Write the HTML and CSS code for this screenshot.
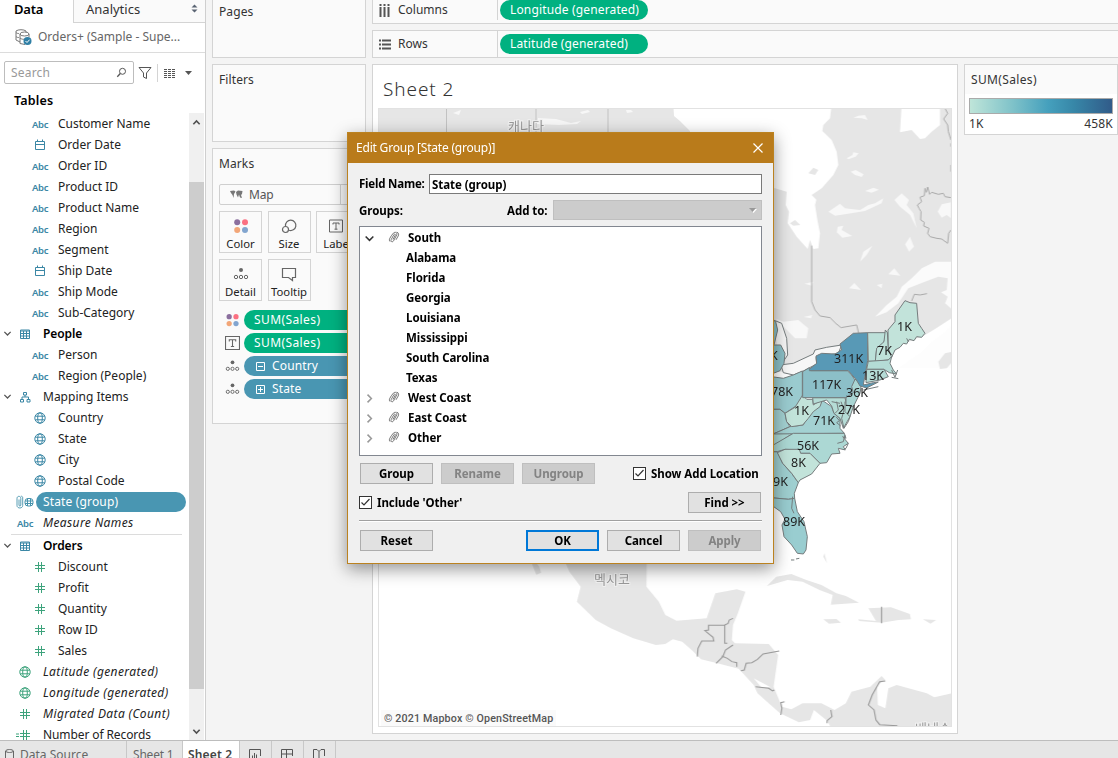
FILE: index.html
```html
<!DOCTYPE html>
<html lang="en">
<head>
<meta charset="utf-8">
<title>Sheet 2</title>
<link rel="stylesheet" href="styles.css">
</head>
<body>
<svg class="defs" width="0" height="0">
  <symbol id="globe" viewBox="0 0 12 12"><g fill="none" stroke="currentColor"><circle cx="6" cy="6" r="5.2"/><ellipse cx="6" cy="6" rx="2.3" ry="5.2"/><path d="M1.300 4.200h9.400M1.300 7.800h9.400"/></g></symbol>
  <symbol id="hash" viewBox="0 0 12 12"><path d="M4.500 1v10M7.500 1v10M1 4.500h10M1 7.500h10" fill="none" stroke="currentColor"/></symbol>
  <symbol id="cal" viewBox="0 0 12 12"><path d="M1.500 2.500h9v8h-9zM1.500 5.500h9M3.500 .5v2M8.500 .5v2" fill="none" stroke="currentColor"/></symbol>
  <symbol id="table" viewBox="0 0 12 12"><path d="M1.500 2h9v8.500h-9zM1 3h10M1.500 5.500h9M1.500 8h9M4.500 3v7.500M7.500 3v7.500" fill="none" stroke="currentColor"/></symbol>
  <symbol id="tree" viewBox="0 0 12 12"><path d="M4.500 1.500h3v2.500h-3zM1.500 8.500h3v2.500h-3zM8 8.500h3v2.500h-3zM6 4v2M3 8.500v-2.500h6.500v2.500" fill="none" stroke="currentColor"/></symbol>
  <symbol id="down" viewBox="0 0 10 10"><path d="M1.500 3.200L5 6.700l3.500-3.500" fill="none" stroke="currentColor" stroke-width="1.400"/></symbol>
  <symbol id="clip" viewBox="0 0 12 12"><path d="M5 8.500L7.200 4.300C7.800 3 6.300 2.700 5.800 3.700L3.200 8.600c-.9 2 1.300 3 2.300 1.300L8.700 4C9.800 1.700 7.300.4 5.400 2.100 3.900 3.500 2.700 5.800 1.800 7.300c-.7 1.200-.5 2.600.3 3.300M8.700 1.200c2 .3 2.300 2.200 1.500 3.800L8 8.800" fill="none" stroke="currentColor" stroke-width=".8"/></symbol>
  <symbol id="detail" viewBox="0 0 16 13"><circle cx="8" cy="2.500" r="2" fill="#666"/><g fill="none" stroke="#666"><circle cx="3" cy="9.500" r="1.700"/><circle cx="8" cy="9.500" r="1.700"/><circle cx="13" cy="9.500" r="1.700"/></g></symbol>
  <symbol id="dots" viewBox="0 0 16 16"><circle cx="4.200" cy="4.200" r="3" fill="#8b6f9e"/><circle cx="12" cy="4.200" r="3" fill="#fb7182"/><circle cx="4.200" cy="12" r="3" fill="#f2a678"/><circle cx="12" cy="12" r="3" fill="#82a5cf"/></symbol>
  <symbol id="text" viewBox="0 0 14 13"><path d="M.5.5h13v12H.5zM4 5V3.500h6V5M7 3.500v6.300M5.500 9.700h3" fill="none" stroke="#666"/></symbol>
</svg>

<div class="app">
  <aside class="side">
    <div class="tabs"><div class="tab on">Data</div><div class="tab off">Analytics
      <svg width="7" height="9" viewBox="0 0 7 9"><path d="M.5 3.500h6L3.500.5zM.5 5.500h6l-3 3z" fill="#5a6473"/></svg></div></div>
    <div class="source">
      <svg width="18" height="17" viewBox="0 0 18 17"><g fill="none" stroke="#777"><path d="M11 3V2C9 .3 3 .3 1 2v9l4 2"/><path d="M1 3.500c1 1 2 1 3 1M1 7.500c1 1 2 1 3 1"/><ellipse cx="9.500" cy="5" rx="4.500" ry="2"/><path d="M5 5v9.500l5 1M14 5v3M5 9c2 1.500 3 1.300 4.500 1.300"/></g><circle cx="12.500" cy="12" r="4" fill="#2f7fa5"/><path d="M10.500 12l1.500 1.500 2.600-2.800" fill="none" stroke="#fff"/></svg>
      <span>Orders+ (Sample - Supe...</span>
    </div>
    <div class="searchrow">
      <div class="search"><span>Search</span><svg width="11" height="11" viewBox="0 0 11 11"><circle cx="6.500" cy="4.300" r="3" fill="none" stroke="#555"/><path d="M4.300 6.500L1.300 9.700" stroke="#555" stroke-width="1.300"/></svg></div>
      <svg width="14" height="14" viewBox="0 0 14 14"><path d="M1 1.500h12L8.500 7v5.500l-3-1.500V7z" fill="none" stroke="#555"/></svg>
      <i class="vr"></i>
      <svg width="12" height="10" viewBox="0 0 12 10"><path d="M0 1.500h12M0 3.500h12M0 5.500h12M0 7.500h12M0 9.500h12" stroke="#555" stroke-dasharray="3 1"/></svg>
      <svg class="drop" width="7" height="4" viewBox="0 0 7 4"><path d="M0 0h7L3.500 4z" fill="#555"/></svg>
    </div>
    <h2 class="tables">Tables</h2>
    <div class="listwrap">
      <div class="list">
        <div class="row sub"><b>Abc</b><span>Customer Name</span></div>
        <div class="row sub"><svg><use href="#cal"/></svg><span>Order Date</span></div>
        <div class="row sub"><b>Abc</b><span>Order ID</span></div>
        <div class="row sub"><b>Abc</b><span>Product ID</span></div>
        <div class="row sub"><b>Abc</b><span>Product Name</span></div>
        <div class="row sub"><b>Abc</b><span>Region</span></div>
        <div class="row sub"><b>Abc</b><span>Segment</span></div>
        <div class="row sub"><svg><use href="#cal"/></svg><span>Ship Date</span></div>
        <div class="row sub"><b>Abc</b><span>Ship Mode</span></div>
        <div class="row sub"><b>Abc</b><span>Sub-Category</span></div>
        <div class="row head"><svg class="car"><use href="#down"/></svg><svg><use href="#table"/></svg><span>People</span></div>
        <div class="row sub"><b>Abc</b><span>Person</span></div>
        <div class="row sub"><b>Abc</b><span>Region (People)</span></div>
        <div class="row"><svg class="car"><use href="#down"/></svg><svg><use href="#tree"/></svg><span>Mapping Items</span></div>
        <div class="row sub"><svg><use href="#globe"/></svg><span>Country</span></div>
        <div class="row sub"><svg><use href="#globe"/></svg><span>State</span></div>
        <div class="row sub"><svg><use href="#globe"/></svg><span>City</span></div>
        <div class="row sub"><svg><use href="#globe"/></svg><span>Postal Code</span></div>
        <div class="row sel"><svg class="pair" viewBox="0 0 18 14"><path d="M3 4.500v5.500c0 1.500 1.800 1.500 1.800 0V3.500C4.800.6 1 .6 1 3.500v7c0 3.300 5.700 3.300 5.700 0V2.500C6.700 1.500 5.500 1 4.800 1.300" fill="none" stroke="#4693ad" stroke-width=".9"/><g fill="none" stroke="#4693ad"><rect x="9" y="3.500" width="8" height="7.500" rx="3"/><path d="M9 6h8M9 8.500h8M11.500 3.500v7.500M14.500 3.500v7.500"/></g></svg><span>State (group)</span></div>
        <div class="row it"><b>Abc</b><span>Measure Names</span></div>
        <hr>
        <div class="row head"><svg class="car"><use href="#down"/></svg><svg><use href="#table"/></svg><span>Orders</span></div>
        <div class="row sub green"><svg><use href="#hash"/></svg><span>Discount</span></div>
        <div class="row sub green"><svg><use href="#hash"/></svg><span>Profit</span></div>
        <div class="row sub green"><svg><use href="#hash"/></svg><span>Quantity</span></div>
        <div class="row sub green"><svg><use href="#hash"/></svg><span>Row ID</span></div>
        <div class="row sub green"><svg><use href="#hash"/></svg><span>Sales</span></div>
        <div class="row it green"><svg><use href="#globe"/></svg><span>Latitude (generated)</span></div>
        <div class="row it green"><svg><use href="#globe"/></svg><span>Longitude (generated)</span></div>
        <div class="row it green"><svg><use href="#hash"/></svg><span>Migrated Data (Count)</span></div>
        <div class="row green calc"><svg viewBox="0 0 15 12"><path d="M0 5h3M0 7.500h3M7.500 1v10M10.500 1v10M4 4.500h10M4 7.500h10" fill="none" stroke="currentColor"/></svg><span>Number of Records</span></div>
      </div>
      <div class="scroll"><svg viewBox="0 0 10 10"><path d="M1.500 7L5 3.300 8.500 7" fill="none" stroke="#505050" stroke-width="1.800"/></svg><i></i><svg viewBox="0 0 10 10"><path d="M1.500 3L5 6.700 8.500 3" fill="none" stroke="#505050" stroke-width="1.800"/></svg></div>
    </div>
  </aside>

  <section class="cards">
    <div class="card pages">Pages</div>
    <div class="card filters">Filters</div>
    <div class="card marks">
      <div class="mt">Marks</div>
      <div class="select"><svg width="13" height="9" viewBox="0 0 13 9"><path d="M0 1l4-.5 1.500 1L4 4 3.500 8 2.500 5 1 3zM6 2l2-1.500L12.500 1l-.5 3-1 1 1 3-2-.5-1-3-1 3-1.500-3z" fill="#777"/></svg><span>Map</span></div>
      <div class="btns">
        <div class="mb"><svg width="16" height="16"><use href="#dots"/></svg>Color</div>
        <div class="mb"><svg width="16" height="16" viewBox="0 0 16 16"><g fill="none" stroke="#666" stroke-width="1.200"><path d="M4.500 8a5.200 5.200 0 1 1 3.500 4.300"/><circle cx="4.500" cy="11.500" r="3"/></g></svg>Size</div>
        <div class="mb"><svg class="lt-ic" width="14" height="16"><use href="#text"/></svg>Label</div>
        <div class="mb"><svg width="16" height="16"><use href="#detail"/></svg>Detail</div>
        <div class="mb"><svg width="16" height="16" viewBox="0 0 16 16"><path d="M1.500 2.500h13v9h-3v3l-4-3h-6z" fill="none" stroke="#666" stroke-width="1.200"/></svg>Tooltip</div>
      </div>
      <div class="pr"><svg><use href="#dots"/></svg><div class="pill g">SUM(Sales)</div></div>
      <div class="pr"><svg><use href="#text"/></svg><div class="pill g">SUM(Sales)</div></div>
      <div class="pr"><svg><use href="#detail"/></svg><div class="pill b"><svg viewBox="0 0 9 9"><path d="M.5.5h8v8h-8zM2 4.500h5" fill="none" stroke="#fff"/></svg>Country</div></div>
      <div class="pr"><svg><use href="#detail"/></svg><div class="pill b"><svg viewBox="0 0 9 9"><path d="M.5.5h8v8h-8zM2 4.500h5M4.500 2v5" fill="none" stroke="#fff"/></svg>State</div></div>
    </div>
  </section>

  <main class="main">
    <div class="shelf first"><div class="lab"><svg width="12" height="13" viewBox="0 0 12 13"><path d="M1.500 0v2M5.500 0v2M9.500 0v2M1.500 3v10M5.500 3v10M9.500 3v10" stroke="#555" stroke-width="2"/></svg>Columns</div><div class="pill g">Longitude (generated)</div></div>
    <div class="shelf"><div class="lab"><svg width="12" height="11" viewBox="0 0 12 11"><path d="M0 1.500h2M3 1.500h9M0 5.500h2M3 5.500h9M0 9.500h2M3 9.500h9" stroke="#555" stroke-width="2"/></svg>Rows</div><div class="pill g">Latitude (generated)</div></div>
    <div class="work">
      <div class="sheet">
        <h1>Sheet 2</h1>
        <svg class="map" viewBox="378 108 574 619">
          <defs><filter id="soft" x="-5%" y="-5%" width="110%" height="110%"><feGaussianBlur stdDeviation=".5"/></filter></defs>
          <g filter="url(#soft)" fill="#e6e6e6">
            <path d="M370 100H673L674 116 680 121 690 131 690 200H370Z"/>
            <g transform="translate(765 105) scale(.3333)">
              <path d="M200 0L195 40 175 60 172 78 200 105 215 140 220 180 205 210 170 250 140 270 154 284 150 300 158 350 165 385 160 430 145 432 135 405 128 432 95 395 68 355 72 320 62 300 65 260 30 250H-100V800H200L380 730 420 715 480 690 510 672 560 640 580 500V0H525L525 60 500 80 480 100 465 102 440 75 405 82 410 0Z"/>
              <path d="M580 470H510L470 490 440 520 410 545 395 575 365 600 330 635 365 622 400 595 430 550 480 530 520 515 548 520 545 555 528 562 548 575 540 595 580 630Z" fill="#fbfbfb"/>
              <path d="M470 740L500 710 540 680 560 660V690L580 790H400Z" fill="#fdfdfd"/>
              <path d="M520 770L540 745 562 740V770L545 790 525 792Z"/>
              <g fill="#f8f8f8"><path d="M265 38L280 32 300 30 308 45 290 40ZM245 160L262 150 265 142 281 145 272 155 250 163ZM257 200L272 195 296 208 290 216 270 210ZM300 258L325 248 342 254 320 263ZM190 320L225 296 240 310 285 315 310 300 330 295 355 280 350 295 300 318 240 328 210 332ZM388 285L410 265 432 285 425 300 445 325 455 370 435 330 405 305ZM218 365L235 362 230 375 262 393 232 398 215 382ZM420 418L435 395 447 425 432 440ZM285 470L295 440 322 422 305 450ZM252 550L268 534 288 555ZM370 508L388 490 406 512ZM335 540L352 536 350 550ZM118 536L145 530 140 542ZM518 320L530 298 558 292V340L545 330 530 338ZM30 640L55 650 100 645 130 670 125 700 90 700 60 670ZM116 636L142 630 138 640Z"/></g>
              <path d="M75 355L90 345 106 360 85 362ZM130 205L145 188 160 195 150 210Z"/>
              <path d="M140 422V590L150 615 165 633 195 638 212 655 228 668 275 660 281 685M440 588L448 568 465 570 486 566M480 250L484 262 488 246 494 268 500 262 520 268 535 265 540 275 558 278M480 250L478 272 465 277 470 290 457 300 462 310 468 320 467 345 478 352 476 363 492 370 488 385 495 395 515 400 530 402 548 415 551 385 558 375M540 10L548 25 536 42 548 60 550 80 558 105M558 115V125M558 180V200" fill="none" stroke="#aaa" stroke-width="3"/>
            </g>
            <path d="M446.500 100V140M536 100V140M608 100V140" stroke="#c2c2c2"/>
            <path d="M453 113l8-3-2 5zM538 118l18 1 15 4 10-2-4 3-18 1-22-1zM580 112l8-2 2 2-8 2zM626 110h5l2 2-6 1z" fill="#f7f7f7"/>
            <g transform="translate(370 550) scale(.3762 .3333)">
              <path d="M505 0L530 65 560 110 550 155 600 210 640 235 700 265 760 285 785 282 805 268 830 275 855 300 880 328 918 338 980 356 985 362 1020 405 1030 430 1065 465 1090 490 1140 517 1170 510 1180 480 1215 512 1225 532H1547V430L1500 442 1480 430 1400 405 1378 415 1370 475 1350 465 1348 405 1370 390 1360 378 1330 410 1280 425 1265 460 1235 480 1200 460 1150 460 1120 478 1095 470 1073 410 1085 315 1060 282 970 280 962 270 965 225 978 190 998 125 975 118 918 130 895 205 815 212 785 195 768 155 735 110 736 0ZM410 0L430 40 442 74 455 68 450 50 430 20 428 0ZM1055 108L1080 80 1120 72 1160 90 1200 105 1240 130 1265 138 1300 158 1225 164 1230 135 1195 120 1150 95 1110 90ZM1205 208L1240 207 1252 218 1220 221ZM1298 208L1345 213 1325 175 1385 172 1435 192 1438 208 1405 210 1360 218 1300 213ZM1470 208L1505 210 1490 221ZM1208 10L1215 40 1205 20Z"/>
              <path d="M1020 385L1065 412 1040 412Z" fill="#fff"/>
              <path d="M870 320L872 295 882 273H914L912 262 890 242 900 240 900 226H943V280H950M943 225L952 220 955 210 965 205M920 340L938 320 945 300 965 285M935 318L950 325 962 335 975 338V350M986 362L995 360 1000 340 1015 338 1030 328 1045 312 1088 303M1025 410L1060 415 1070 423 1075 420M1102 455L1092 458 1095 475 1092 495M1225 480L1228 500 1215 512 1215 520M1370 393L1355 395 1335 435 1325 465 1340 480 1345 510 1355 524 1402 527M1360 170V220" fill="none" stroke="#999" stroke-width="3"/>
            </g>
          </g>
          <g transform="translate(760 270) scale(.3333)" stroke="#747b7c" stroke-width="3" stroke-linejoin="round">
            <path d="M40 150L65 160 80 205 83 255 63 285 70 308 100 315 130 303 170 282 168 262 235 250 245 225 200 232 165 240 160 252 100 280 60 285" fill="#f7f7f7"/>
            <path d="M20 140L47 155 53 180 42 225 62 225 75 250 72 280 60 302 20 318Z" fill="#8cc1c8"/>
            <path d="M20 318L70 325 100 315 127 303V400L105 410 75 430 60 418 20 418Z" fill="#9acbcf"/>
            <path d="M20 418L60 418 75 430 80 455 90 470 40 492H20Z" fill="#a3d1d2"/>
            <path d="M20 490H100L75 505 30 545H20Z" fill="#acd8d4"/>
            <path d="M20 545H52L68 580 95 610 115 638 103 670 104 685 85 688 20 682Z" fill="#9fcfd0"/>
            <path d="M20 682L85 688 104 685 112 725 132 755 142 800 138 840 130 852 112 850 95 825 72 800 66 765 75 748 62 725 20 695Z" fill="#99cdd0"/>
            <path d="M40 492L90 470 130 465 150 425 175 410 188 392 215 410 222 430 240 445 240 475 253 490Z" fill="#a3d1d2"/>
            <path d="M40 525L100 490H253L258 505 248 500 265 520 250 530 256 540 235 535 240 550 215 552 200 578 180 580 150 550H120L118 540 75 538 52 545 40 545Z" fill="#acd8d4"/>
            <path d="M52 548L75 538H118L122 550H150L180 580 155 612 120 630 115 638 95 610 68 580Z" fill="#c2e3da"/>
            <path d="M128 375L140 388H158L160 405 188 387 180 410 160 425 145 445 128 465 95 470 80 455 75 430 105 412Z" fill="#c2e3da"/>
            <path d="M158 383H255L260 405 280 410 270 440 250 475 240 445 222 430 215 408 200 390 160 402Z" fill="#b5dcd6"/>
            <path d="M128 305L148 293 152 302H262L275 315 285 330 278 350 282 368 258 383H128Z" fill="#8cbfc8"/>
            <path d="M285 328L305 338 300 370 280 410 258 405V383L280 368 275 350Z" fill="#a9d5d3"/>
            <path d="M148 298L170 280 168 258 185 250 225 252 245 240 240 222 280 190 323 188V272L318 300 310 345 340 338 355 336 320 354 300 348 288 328 265 302H148Z" fill="#5899b6"/>
            <path d="M323 188H382L370 220 350 235 346 274H325Z" fill="#bce0d9"/>
            <path d="M382 188L376 180 372 215 350 235 346 274 385 270 395 260 385 235Z" fill="#bfe2da"/>
            <path d="M325 274L385 270 395 260 390 280 400 300 410 312 388 308 372 298H320Z" fill="#b4dcd6"/>
            <path d="M320 298H372L385 320 360 330 318 338Z" fill="#b5dcd6"/>
            <path d="M384 180L405 155V135L435 92 450 98 470 100 475 160 485 175 495 190 485 202 470 200 462 212 448 208 440 222 430 220 420 232 405 240 395 262 385 235Z" fill="#c2e3da"/>
            <path d="M243 395L252 420 245 445 252 475 265 455 270 440 255 425V395M228 440L238 452 230 458 242 468M255 495L250 515 232 520M265 520L258 535 252 538M98 680L95 715 102 730M395 300L405 322 413 300M395 322L415 326M440 205L445 215M103 870H93M118 865L108 867M230 395L235 420 225 430M240 400L215 395M355 350L310 360" fill="none"/>
          </g>
          <g class="ml"><text x="897" y="331">1K</text><text x="877" y="355">7K</text><text x="834" y="363">311K</text><text x="862" y="380">13K</text><text x="812" y="389">117K</text><text x="846" y="397">36K</text><text x="771" y="396">78K</text><text x="794" y="415">1K</text><text x="838" y="414">27K</text><text x="813" y="425">71K</text><text x="797" y="450">56K</text><text x="791" y="467">8K</text><text x="773" y="486">9K</text><text x="783" y="526">89K</text><text x="770" y="360">K</text></g>
          <g class="mk"><text x="508" y="131">캐나다</text><text x="594" y="584">멕시코</text><text x="915" y="733">베네수</text></g>
        </svg>
        <div class="attr">© 2021 Mapbox © OpenStreetMap</div>
      </div>
      <div class="legend"><div class="lt">SUM(Sales)</div><div class="ramp"></div><div class="ends"><span>1K</span><span>458K</span></div></div>
    </div>
  </main>
</div>

<footer class="foot">
  <div class="ft ds"><svg width="9" height="12" viewBox="0 0 9 12"><path d="M.5 2v8c1 2 7 2 8 0V2M.5 2c1 2 7 2 8 0-1-2-7-2-8 0z" fill="none" stroke="#666"/></svg>Data Source</div>
  <div class="ft s1">Sheet 1</div>
  <div class="ft on">Sheet 2</div>
  <div class="ft ic"><svg viewBox="0 0 12 12"><path d="M11.500 7V.5H.5v11h7M3.500 9V6.500M5.500 9V4M7.500 9V5.500M11.500 9v3M9.500 11h4" fill="none" stroke="#555"/></svg></div>
  <div class="ft ic"><svg viewBox="0 0 12 12"><path d="M11.500 7V.5H.5v9h7M.5 5h11M5.500.5v9M10.500 9v3M9 10.500h3" fill="none" stroke="#555"/></svg></div>
  <div class="ft ic"><svg viewBox="0 0 12 12"><path d="M6 2.500L4 .5H.5v9H4l2 1.500V2.500l2-2h3.500V7M10.500 9v3M9 10.500h3" fill="none" stroke="#555"/></svg></div>
</footer>

<div class="dialog">
  <div class="title"><span>Edit Group [State (group)]</span><svg width="10" height="10" viewBox="0 0 10 10"><path d="M.5.5l9 9M9.500.5l-9 9" stroke="#fff" stroke-width="1.200"/></svg></div>
  <div class="body">
    <div class="frow"><label>Field Name:</label><div class="input">State (group)</div></div>
    <div class="grow"><label>Groups:</label><label class="add">Add to:</label><div class="combo"><svg width="8" height="5" viewBox="0 0 8 5"><path d="M1 1h7L4.500 5z" fill="#fff"/><path d="M0 0h7L3.500 4z" fill="#999"/></svg></div></div>
    <div class="tree">
      <div class="tr"><svg class="ar dk"><use href="#down"/></svg><svg class="cl"><use href="#clip"/></svg>South</div>
      <div class="tr kid">Alabama</div><div class="tr kid">Florida</div><div class="tr kid">Georgia</div><div class="tr kid">Louisiana</div><div class="tr kid">Mississippi</div><div class="tr kid">South Carolina</div><div class="tr kid">Texas</div>
      <div class="tr"><svg class="ar rt"><use href="#down"/></svg><svg class="cl"><use href="#clip"/></svg>West Coast</div>
      <div class="tr"><svg class="ar rt"><use href="#down"/></svg><svg class="cl"><use href="#clip"/></svg>East Coast</div>
      <div class="tr"><svg class="ar rt"><use href="#down"/></svg><svg class="cl"><use href="#clip"/></svg>Other</div>
    </div>
    <div class="brow r1"><div class="btn">Group</div><div class="btn dis">Rename</div><div class="btn dis">Ungroup</div><div class="chk push"><i><svg viewBox="0 0 11 11"><path d="M1.500 5.500L4 8l5.500-6" fill="none" stroke="#333" stroke-width="1.200"/></svg></i>Show Add Location</div></div>
    <div class="brow r2"><div class="chk"><i><svg viewBox="0 0 11 11"><path d="M1.500 5.500L4 8l5.500-6" fill="none" stroke="#333" stroke-width="1.200"/></svg></i>Include 'Other'</div><div class="btn push">Find &gt;&gt;</div></div>
    <div class="rule"></div>
    <div class="brow r3"><div class="btn">Reset</div><div class="btn ok push">OK</div><div class="btn">Cancel</div><div class="btn dis">Apply</div></div>
  </div>
</div>
</body>
</html>
```
FILE: styles.css
```css
* { box-sizing: border-box; }
body { margin: 0; width: 1118px; height: 758px; overflow: hidden; position: relative; background: #f4f4f4; font: 12px/16px "Noto Sans", "Noto Sans CJK KR", sans-serif; color: #333; }
svg { flex: none; display: block; }
.defs { position: absolute; }
.app { display: flex; height: 741px; overflow: hidden; }

/* Data pane */
.side { width: 206px; flex: none; background: #fff; border-right: 1px solid #cfcfcf; display: flex; flex-direction: column; white-space: nowrap; }
.tabs { display: flex; height: 23px; font-size: 13px; }
.tab { height: 23px; line-height: 18px; }
.tab.on { width: 73px; padding-left: 14px; font-weight: 600; color: #000; letter-spacing: -.2px; }
.tab.off { flex: 1; padding: 0 7px 0 12px; border: 1px solid #d4d4d4; border-width: 0 0 1px 1px; background: #fafafa; display: flex; justify-content: space-between; }
.tab.off svg { margin-top: 4px; }
.source { height: 30px; border-bottom: 1px solid #dcdcdc; display: flex; align-items: center; gap: 5px; padding-left: 15px; color: #666; }
.source span { margin-top: -1px; }
.searchrow { display: flex; height: 39px; align-items: center; padding-left: 4px; }
.search { width: 130px; height: 23px; border: 1px solid #bdbdbd; border-radius: 2px; display: flex; align-items: center; justify-content: space-between; padding: 0 6px; color: #999; margin-right: 4px; letter-spacing: .2px; }
.vr { width: 1px; height: 18px; background: #d4d4d4; margin: 0 6px 0 5px; }
.drop { margin-left: 9px; }
.tables { margin: 0; height: 21px; line-height: 17px; padding-left: 14px; font-size: 12.500px; font-weight: 600; color: #000; letter-spacing: .2px; }
.listwrap { flex: 1; min-height: 0; display: flex; }
.list { width: 189px; overflow: hidden; }
.row { height: 21px; display: flex; align-items: center; position: relative; padding-left: 19px; color: #222; }
.row > svg { width: 12px; height: 12px; margin-right: 12px; }
.row > svg, .row b { color: #3b87a5; }
.row b { width: 18px; font: 600 9.500px/16px "Noto Sans"; margin: 2px 8px 0 -2px; letter-spacing: -.3px; }
.row span { margin-top: .5px; }
.row.sub { padding-left: 34px; }
.row > svg.car { width: 9px; height: 9px; margin: 0 7px 0 -16px; color: #555; }
.row.green > svg { color: #3da37c; }
.row.head span { font-weight: 600; color: #000; letter-spacing: -.1px; }
.row.it span { font-style: italic; letter-spacing: .38px; }
.row.sel { padding-left: 16px; }
.row.sel .pair { width: 18px; height: 14px; margin-right: 2px; }
.row.sel span { background: #4996b2; color: #fff; width: 150px; height: 20px; line-height: 19px; border-radius: 10px; padding-left: 7px; letter-spacing: .15px; margin: 0; }
.row.calc { padding-left: 16px; }
.row.calc > svg { width: 15px; }
.row.calc span { margin-top: 0; letter-spacing: -.1px; }
.list hr { border: 0; border-top: 1px solid #dcdcdc; margin: 1px 7px 0 11px; }
.scroll { width: 15px; background: #f0f0f0; display: flex; flex-direction: column; align-items: center; padding: 5px 0; }
.scroll svg { width: 9px; height: 9px; }
.scroll i { width: 15px; height: 507px; background: #cdcdcd; margin: 55px 0 38px; }

/* Cards */
.cards { width: 154px; flex: none; margin-left: 6px; display: flex; flex-direction: column; gap: 6px; }
.card { border: 1px solid #d4d4d4; background: #fafafa; padding: 7px 6px 6px; letter-spacing: .1px; }
.pages { height: 58px; border-top: 0; padding-top: 4px; }
.filters { height: 78px; }
.marks { height: 276px; overflow: hidden; }
.mt { height: 28px; }
.select { border: 1px solid #cfcfcf; border-radius: 2px; height: 21px; display: flex; align-items: center; gap: 6px; padding-left: 10px; color: #555; letter-spacing: -.2px; background: linear-gradient(90deg, transparent 120px, #cfcfcf 120px, #cfcfcf 121px, transparent 121px); }
.btns { display: grid; grid-template-columns: repeat(3, 43px); column-gap: 5.500px; row-gap: 6px; margin-top: 6px; }
.mb { height: 42px; border: 1px solid #d4d4d4; display: flex; flex-direction: column; align-items: center; justify-content: space-between; padding-top: 6px; font-size: 11.300px; letter-spacing: 0; color: #222; white-space: nowrap; }
.lt-ic { margin-right: 3px; }
.btns + .pr { margin-top: 9px; }
.pr { display: flex; align-items: center; gap: 4px; margin-bottom: 3px; padding-left: 6px; }
.pr > svg { width: 15px; height: 14px; }
.pill { height: 20px; border-radius: 10px; color: #fff; line-height: 18px; padding: 0 0 1px 10px; font-size: 12px; width: 148px; flex: none; display: flex; align-items: center; letter-spacing: .15px; }
.pr .pill.g { letter-spacing: .4px; }
.pill.g { background: #00b180; }
.pill.b { background: #4996b2; }
.pill svg { width: 9px; height: 9px; margin: 1px 7px 0 2px; }

/* Worksheet */
.main { flex: 1; min-width: 0; margin-left: 6px; display: flex; flex-direction: column; }
.shelf { height: 28px; border: 1px solid #d4d4d4; background: #fafafa; display: flex; align-items: center; margin-bottom: 6px; gap: 2px; border-right: 0; }
.shelf.first { height: 24px; border-top: 0; padding-bottom: 3px; }
.lab { width: 125px; height: 100%; border-right: 1px solid #d4d4d4; display: flex; align-items: center; gap: 7px; padding-left: 6px; }
.work { display: flex; gap: 6px; flex: 1; align-items: flex-start; }
.sheet { width: 586px; height: 670px; border: 1px solid #d4d4d4; background: #fff; padding: 0 5px; position: relative; }
.sheet h1 { margin: 0; height: 43px; line-height: 49px; font-size: 19px; font-weight: 300; padding-left: 5px; color: #333; letter-spacing: .9px; }
.map { width: 574px; height: 619px; outline: 1px solid #e2e2e2; outline-offset: -1px; }
.ml { font-size: 12.500px; fill: #222; }
.mk { font: 13px "Noto Sans CJK KR", sans-serif; fill: #999; stroke: #f2f2f2; stroke-width: 2px; paint-order: stroke; }
.attr { position: absolute; left: 8px; bottom: 7px; padding: 0 3px; background: #fafafa; color: #555; font: 500 10.700px/14px Roboto, sans-serif; height: 16px; line-height: 17px; letter-spacing: .15px; }
.legend { width: 154px; height: 71px; border: 1px solid #d4d4d4; background: #fff; }
.lt { height: 29px; line-height: 29px; padding-left: 6px; background: #fafafa; letter-spacing: .35px; }
.ramp { margin: 4px 4px 0; height: 16px; border: 1px solid #aaa; background: linear-gradient(90deg, #bfe5d9, #7fc2c9 30%, #45a0bd 55%, #3787a8 73%, #315b89); }
.ends { display: flex; justify-content: space-between; padding: 2px 4px 0; line-height: 16px; letter-spacing: .2px; }

/* Sheet tabs */
.foot { display: flex; height: 28px; background: #e6e6e6; border-top: 1px solid #bdbdbd; margin-top: -1px; position: relative; font-size: 12px; color: #666; }
.ft { border-right: 1px solid #c8c8c8; height: 27px; display: flex; align-items: center; white-space: nowrap; }
.ft.ds { width: 127px; padding-left: 5px; gap: 6px; }
.ft.s1 { width: 56px; padding-left: 6px; letter-spacing: -.2px; }
.ft.on { width: 57px; padding-left: 5px; background: #fff; font-weight: 600; color: #444; letter-spacing: .15px; }
.ft.ic { width: 32px; padding-left: 9px; }
.ft.ic svg { width: 12px; height: 12px; overflow: visible; }

/* Edit Group dialog */
.dialog { position: absolute; left: 347px; top: 132px; width: 427px; height: 432px; border: 1px solid #bb8220; background: #f0f0f0; box-shadow: 0 5px 16px rgba(0,0,0,.42); color: #000; font: 700 11.500px/14px "Noto Sans", sans-serif; letter-spacing: -.05px; }
.title { height: 30px; background: #b97b1b; color: #fff; font: 400 12px/29px "Noto Sans"; display: flex; align-items: center; justify-content: space-between; padding: 0 10px 0 8px; letter-spacing: -.2px; }
.title span { margin-top: -1px; }
.body { padding: 11px 11px 0; }
.frow { display: flex; align-items: center; height: 20px; white-space: nowrap; }
.frow label { width: 70px; letter-spacing: -.2px; }
.input { flex: 1; height: 20px; border: 1px solid #7a7a7a; background: #fff; padding: 2px; line-height: 16px; }
.grow { display: flex; align-items: center; height: 20px; margin-top: 6px; }
.grow label { width: 148px; padding-top: 1px; }
.grow .add { width: 46px; white-space: nowrap; }
.combo { flex: 1; height: 20px; background: #ccc; border: 1px solid #bfbfbf; display: flex; justify-content: flex-end; align-items: center; padding-right: 4px; }
.tree { margin-top: 6px; height: 230px; border: 1px solid #828790; background: #fff; padding-top: 1px; }
.tr { height: 20px; display: flex; align-items: center; padding-left: 4px; }
.tr.kid { padding-left: 46px; }
.ar { width: 11px; height: 11px; margin-right: 13px; color: #999; }
.ar.dk { color: #333; }
.ar.rt { transform: rotate(-90deg); }
.cl { width: 12px; height: 12px; margin: -2px 8px 0 0; color: #555; }
.brow { display: flex; align-items: center; gap: 8px; height: 21px; padding: 0 1px; }
.r1 { margin-top: 7px; }
.r2 { margin-top: 8px; padding-left: 0; }
.btn { width: 73px; height: 21px; border: 1px solid #adadad; background: #e1e1e1; display: flex; align-items: center; justify-content: center; flex: none; padding-top: 1px; }
.btn.dis { background: #ccc; border-color: #bfbfbf; color: #838383; }
.btn.ok { border: 2px solid #0078d7; }
.push { margin-left: auto; }
.chk { display: flex; align-items: center; gap: 5px; white-space: nowrap; }
.r1 .chk { width: 128px; }
.chk i { width: 13px; height: 13px; border: 1px solid #333; background: #fff; }
.chk svg { width: 11px; height: 11px; }
.rule { height: 2px; margin-top: 7px; background: #fff; border-top: 1px solid #a0a0a0; }
.r3 { margin-top: 8px; }
```
